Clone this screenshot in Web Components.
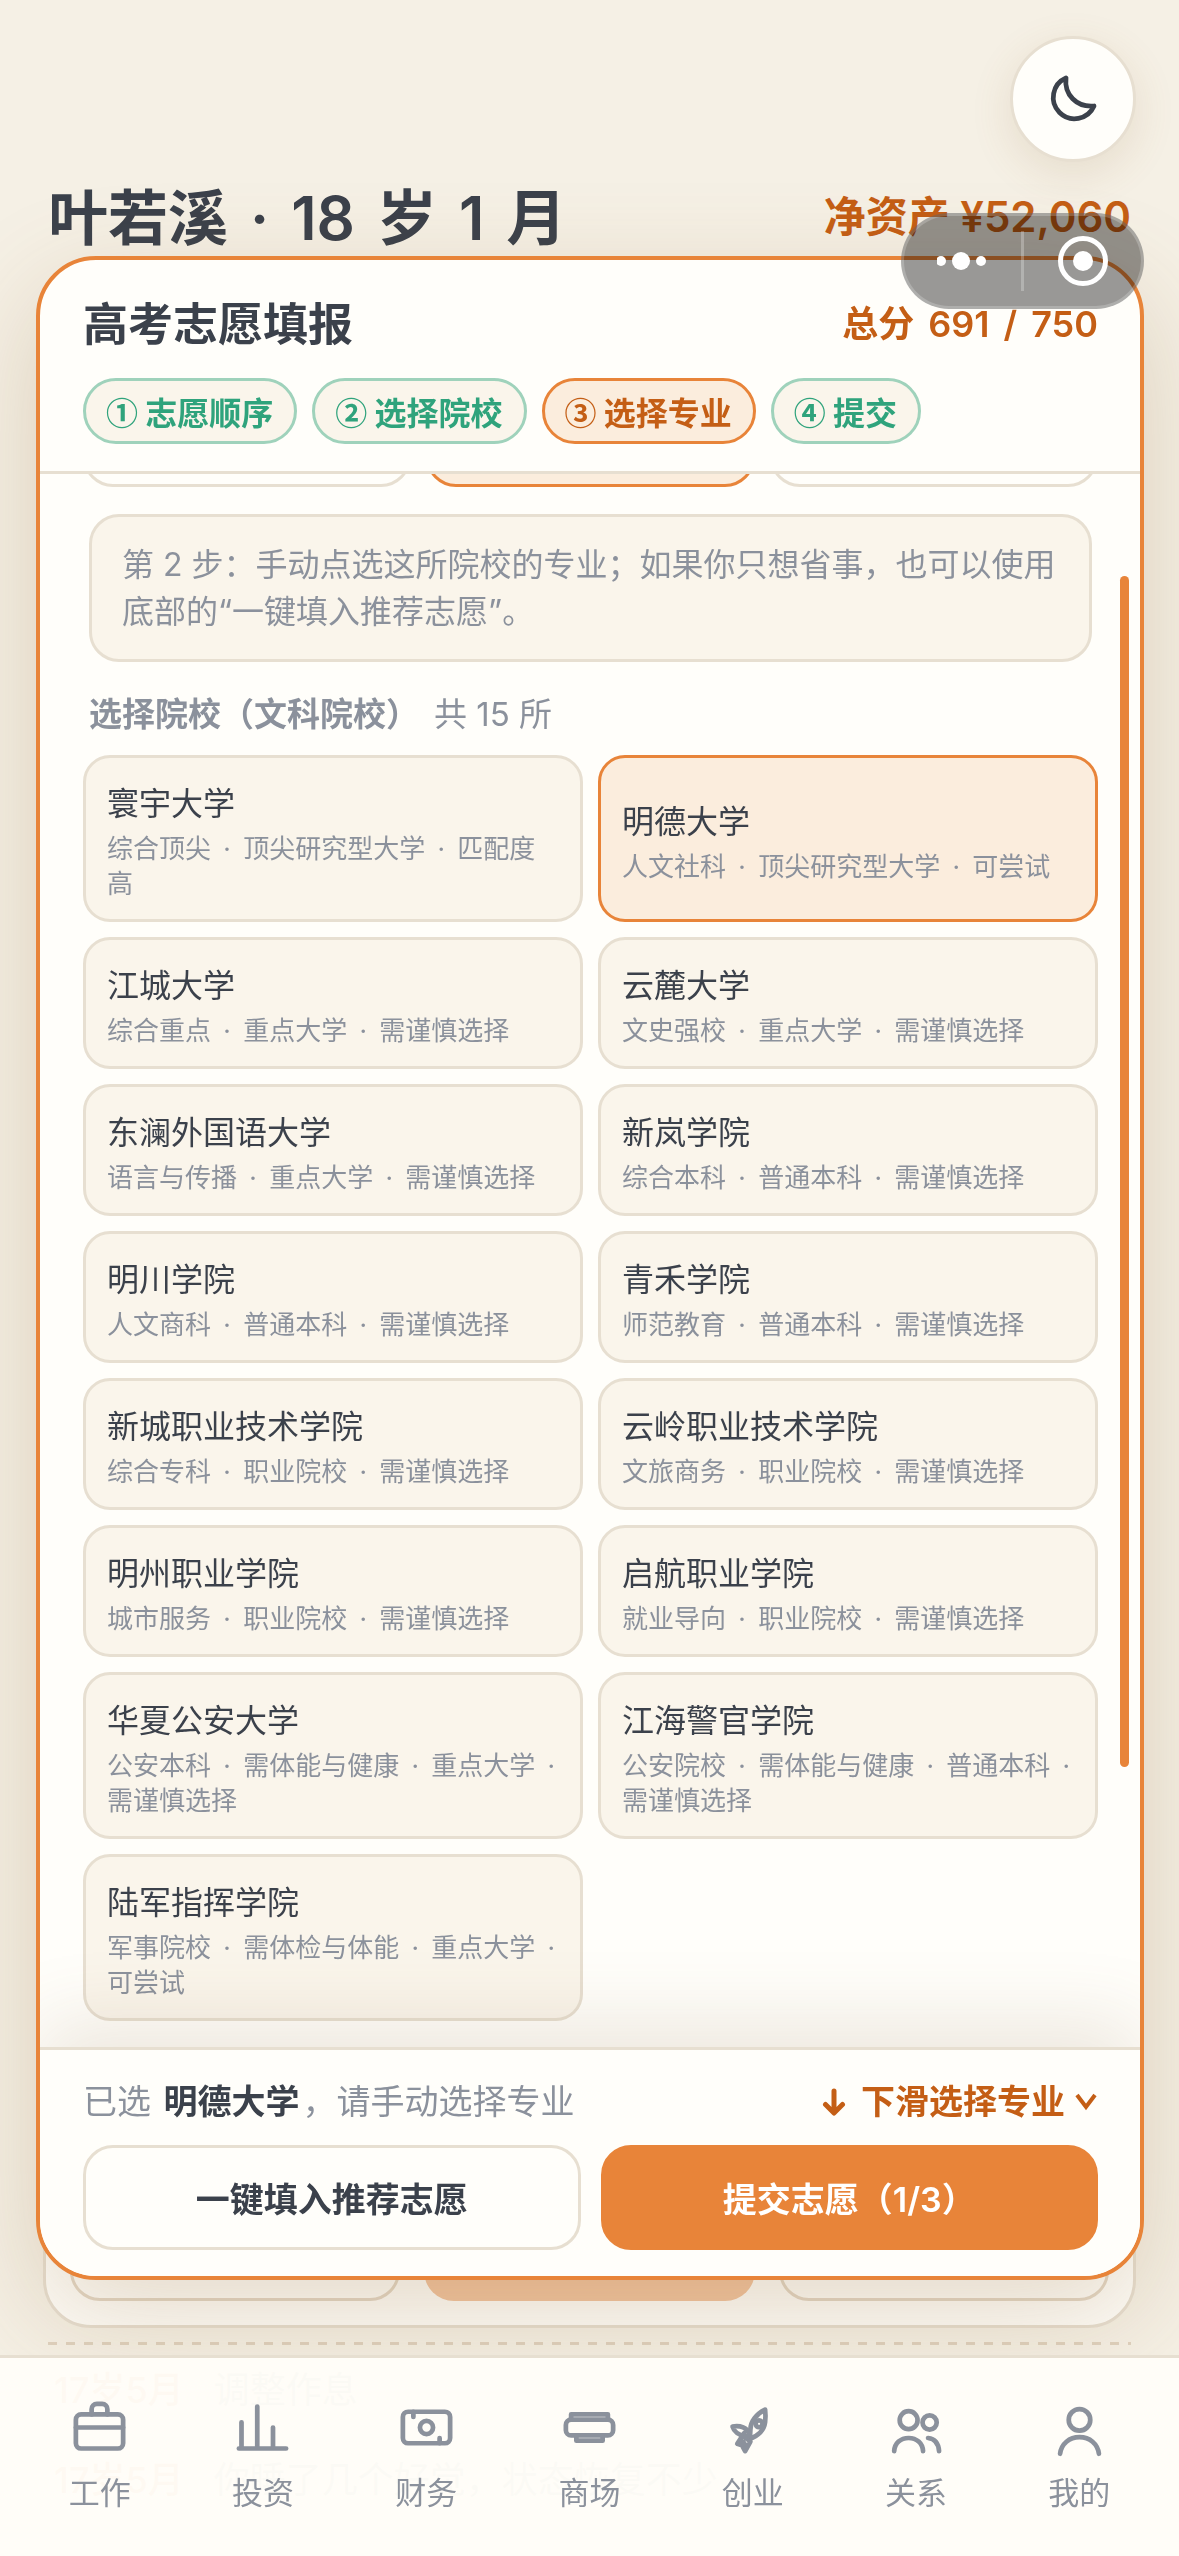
<!DOCTYPE html>
<html lang="zh-CN">
<head>
<meta charset="utf-8">
<meta name="viewport" content="width=device-width, initial-scale=1">
<title>高考志愿填报</title>
<style>
    :root {
        --ink: #3b414b;
        --muted: #8b919c;
        --accent: #e88439;
        --accent-deep: #c45e15;
        --accent-soft: #fbeddd;
        --green: #2fa37c;
        --green-line: #9fd2bb;
        --surface: #fffefa;
        --cream: #faf5eb;
        --line: #e7dfd1;
        --page: #f5f0e5;
    }

    body {
        margin: 0;
        height: 100vh;
        overflow: hidden;
        background: var(--page);
        color: var(--ink);
        font-family: Inter, "Noto Sans CJK SC", sans-serif;
        font-size: 32px;
    }
</style>
</head>
<body>
<game-page>
    <theme-toggle slot="toggle"></theme-toggle>
    <status-header slot="status" name="叶若溪 · 18 岁 1 月" assets="净资产 ¥52,060"></status-header>
    <event-card slot="event"></event-card>
    <log-line slot="log" when="17岁5月">调整作息</log-line>
    <log-line slot="log" when="17岁5月">你睡了几个好觉，状态恢复不少</log-line>
</game-page>
<app-tabbar></app-tabbar>
<volunteer-dialog></volunteer-dialog>
<mini-capsule></mini-capsule>

<script>
// one span per word, so that the row's gap sets the space between them
const words = text => text.split(" ").map(word => `<span>${word}</span>`).join(" ");

class GamePage extends HTMLElement {

    constructor() {
        super();
        this.shadowDOM = this.attachShadow({mode: "open"});
        this.shadowDOM.innerHTML = `
            <style>
                :host {
                    display: flex;
                    flex-direction: column;
                    box-sizing: border-box;
                    height: 100vh;
                    padding: 36px 43px 0;
                }

                .top {
                    display: flex;
                    justify-content: flex-end;
                }

                .event {
                    flex: 1;
                    display: flex;
                    margin-top: 12px;
                }

                .log {
                    height: 214px;
                    margin: 14px 5px 0;
                    overflow: hidden;
                }

                .dash {
                    height: 3px;
                    background: repeating-linear-gradient(90deg, #dfd2bf 0 9px, transparent 9px 18px);
                }
            </style>

            <div class="top"><slot name="toggle"></slot></div>
            <slot name="status"></slot>
            <div class="event"><slot name="event"></slot></div>
            <div class="log">
                <div class="dash"></div>
                <slot name="log"></slot>
            </div>`;
    }
}

class ThemeToggle extends HTMLElement {

    constructor() {
        super();
        this.shadowDOM = this.attachShadow({mode: "open"});
        this.shadowDOM.innerHTML = `
            <style>
                :host {
                    display: block;
                }

                button {
                    display: grid;
                    place-items: center;
                    box-sizing: border-box;
                    width: 126px;
                    height: 126px;
                    padding: 0;
                    border: 3px solid var(--line);
                    border-radius: 50%;
                    background: var(--surface);
                    color: var(--ink);
                    box-shadow: 0 12px 42px rgba(150, 105, 60, 0.14);
                }

                svg {
                    width: 60px;
                    height: 60px;
                }
            </style>

            <button type="button" aria-label="切换深色模式">
                <svg viewBox="0 0 24 24" fill="none" stroke="currentColor" stroke-width="1.9" stroke-linejoin="round" stroke-linecap="round">
                    <path d="M20.400 14.800A8.500 8.500 0 1 1 9.200 3.600c-.8 6.600 4.200 11.800 11.200 11.200z"/>
                </svg>
            </button>`;
    }
}

class StatusHeader extends HTMLElement {

    connectedCallback() {
        this.shadowDOM = this.attachShadow({mode: "open"});
        this.shadowDOM.innerHTML = `
            <style>
                :host {
                    display: flex;
                    justify-content: space-between;
                    align-items: flex-start;
                    height: 86px;
                    margin: 14px 5px 0;
                }

                h1 {
                    display: flex;
                    gap: 22px;
                    margin: 0;
                    font-size: 60px;
                    font-weight: 600;
                    line-height: 84px;
                }

                .assets {
                    color: var(--accent-deep);
                    font-size: 42px;
                    font-weight: 600;
                    line-height: 82px;
                }
            </style>

            <h1>${words(this.getAttribute("name"))}</h1>
            <div class="assets">${this.getAttribute("assets")}</div>`;
    }
}

class EventCard extends HTMLElement {

    constructor() {
        super();
        this.shadowDOM = this.attachShadow({mode: "open"});
        this.shadowDOM.innerHTML = `
            <style>
                :host {
                    flex: 1;
                    display: grid;
                    grid-template-columns: repeat(3, 1fr);
                    align-items: end;
                    gap: 24px;
                    padding: 24px;
                    border: 3px solid var(--line);
                    border-radius: 48px;
                    background: #fffefa;
                }

                div {
                    box-sizing: border-box;
                    height: 104px;
                    border: 3px solid #e4d9c8;
                    border-radius: 30px;
                }

                .main {
                    border: 0;
                    background: #f3c6a2;
                }
            </style>

            <div></div>
            <div class="main"></div>
            <div></div>`;
    }
}

class LogLine extends HTMLElement {

    constructor() {
        super();
        this.shadowDOM = this.attachShadow({mode: "open"});
        this.shadowDOM.innerHTML = `
            <style>
                :host {
                    display: flex;
                    gap: 30px;
                    padding-left: 6px;
                    color: #6c727c;
                    font-size: 36px;
                    line-height: 90px;
                }

                time {
                    color: var(--accent-deep);
                    font-weight: 500;
                }
            </style>

            <time>${this.getAttribute("when")}</time>
            <span><slot></slot></span>`;
    }
}

class StepPill extends HTMLElement {

    constructor() {
        super();
        this.shadowDOM = this.attachShadow({mode: "open"});
        this.shadowDOM.innerHTML = `
            <style>
                :host {
                    display: block;
                    box-sizing: border-box;
                    padding: 0 21px 0 20px;
                    border: 3px solid var(--green-line);
                    border-radius: 33px;
                    background: var(--cream);
                    color: var(--green);
                    font-family: "Noto Sans CJK SC", sans-serif;
                    font-weight: 600;
                    line-height: 60px;
                    white-space: nowrap;
                }

                :host([active]) {
                    border-color: var(--accent);
                    background: var(--accent-soft);
                    color: var(--accent-deep);
                }
            </style>

            <slot></slot>`;
    }
}

class SchoolCard extends HTMLElement {

    set school(school) {
        this._school = school;
        this.render();
    }

    render() {
        if (!this.shadowDOM) {
            this.shadowDOM = this.attachShadow({mode: "open"});
        }
        this.shadowDOM.innerHTML = `
            <style>
                :host {
                    display: flex;
                }

                button {
                    flex: 1;
                    display: flex;
                    flex-direction: column;
                    justify-content: center;
                    box-sizing: border-box;
                    padding: 18px 22px 18px 21px;
                    border: 3px solid var(--line);
                    border-radius: 27px;
                    background: var(--cream);
                    color: var(--ink);
                    font: inherit;
                    text-align: left;
                }

                button[aria-pressed="true"] {
                    border-color: var(--accent);
                    background: var(--accent-soft);
                }

                .name {
                    font-size: 32px;
                    line-height: 55px;
                }

                .tags {
                    color: var(--muted);
                    font-size: 26px;
                    line-height: 35px;
                }

                .tag:not(:last-child) {
                    margin-right: 5px;
                }

                .dot {
                    margin-right: 5px;
                }

                .dot.last {
                    margin-right: 0;
                }
            </style>

            <button type="button" aria-pressed="${Boolean(this._school.selected)}">
                <span class="name">${this._school.name}</span>
                <span class="tags">${this.renderTags()}</span>
            </button>`;
    }

    renderTags() {
        return this._school.tags.map((tag, i) => {
            const dot = i === 0 ? "" : `<span class="dot${i === 3 ? " last" : ""}">·</span> `;
            return `${dot}<span class="tag">${tag}</span>`;
        }).join(" ");
    }
}

const schools = [
    {name: "寰宇大学", tags: ["综合顶尖", "顶尖研究型大学", "匹配度高"]},
    {name: "明德大学", tags: ["人文社科", "顶尖研究型大学", "可尝试"], selected: true},
    {name: "江城大学", tags: ["综合重点", "重点大学", "需谨慎选择"]},
    {name: "云麓大学", tags: ["文史强校", "重点大学", "需谨慎选择"]},
    {name: "东澜外国语大学", tags: ["语言与传播", "重点大学", "需谨慎选择"]},
    {name: "新岚学院", tags: ["综合本科", "普通本科", "需谨慎选择"]},
    {name: "明川学院", tags: ["人文商科", "普通本科", "需谨慎选择"]},
    {name: "青禾学院", tags: ["师范教育", "普通本科", "需谨慎选择"]},
    {name: "新城职业技术学院", tags: ["综合专科", "职业院校", "需谨慎选择"]},
    {name: "云岭职业技术学院", tags: ["文旅商务", "职业院校", "需谨慎选择"]},
    {name: "明州职业学院", tags: ["城市服务", "职业院校", "需谨慎选择"]},
    {name: "启航职业学院", tags: ["就业导向", "职业院校", "需谨慎选择"]},
    {name: "华夏公安大学", tags: ["公安本科", "需体能与健康", "重点大学", "需谨慎选择"]},
    {name: "江海警官学院", tags: ["公安院校", "需体能与健康", "普通本科", "需谨慎选择"]},
    {name: "陆军指挥学院", tags: ["军事院校", "需体检与体能", "重点大学", "可尝试"]}
];

class VolunteerDialog extends HTMLElement {

    constructor() {
        super();
        this.shadowDOM = this.attachShadow({mode: "open"});
        this.shadowDOM.innerHTML = `
            <style>
                :host {
                    position: fixed;
                    inset: 256px 35px 276px 36px;
                    display: flex;
                    flex-direction: column;
                    border: 4px solid var(--accent);
                    border-radius: 60px;
                    background: var(--surface);
                    box-shadow: 0 36px 108px rgba(140, 95, 45, 0.23);
                    overflow: hidden;
                }

                header {
                    padding: 27px 42px 27px 43px;
                    border-bottom: 3px solid var(--line);
                }

                .title {
                    display: flex;
                    justify-content: space-between;
                    align-items: center;
                    height: 68px;
                    margin-bottom: 23px;
                }

                h2 {
                    margin: 0;
                    font-size: 45px;
                    font-weight: 700;
                }

                .score {
                    display: flex;
                    align-items: baseline;
                    gap: 14px;
                    color: var(--accent-deep);
                    font-size: 36px;
                    font-weight: 600;
                }

                .steps {
                    display: flex;
                    gap: 15px;
                }

                .body {
                    position: relative;
                    flex: 1;
                    display: flex;
                    flex-direction: column;
                    justify-content: flex-end;
                    min-height: 0;
                    padding: 0 42px 26px 43px;
                    overflow: hidden;
                }

                .orders {
                    display: grid;
                    grid-template-columns: repeat(3, 1fr);
                    gap: 15px;
                }

                .orders div {
                    box-sizing: border-box;
                    height: 126px;
                    border: 3px solid var(--line);
                    border-radius: 30px;
                }

                .orders .on {
                    border-color: var(--accent);
                    background: var(--accent-soft);
                }

                .hint {
                    margin: 27px 6px 0;
                    padding: 24px 25px 24px 30px;
                    border: 3px solid var(--line);
                    border-radius: 30px;
                    background: var(--cream);
                    color: var(--muted);
                    line-height: 47px;
                }

                h3 {
                    margin: 27px 6px 0;
                    color: var(--muted);
                    font-size: 33px;
                    font-weight: 600;
                    line-height: 50px;
                }

                h3 small {
                    margin-left: 15px;
                    font-size: 33px;
                    font-weight: 400;
                }

                .grid {
                    display: grid;
                    grid-template-columns: repeat(2, 1fr);
                    gap: 15px;
                    margin-top: 16px;
                }

                .thumb {
                    position: absolute;
                    top: 6.5%;
                    right: 11px;
                    width: 9px;
                    height: 75.7%;
                    border-radius: 5px;
                    background: var(--accent);
                }

                footer {
                    position: relative;
                    padding: 26px 42px 26px 43px;
                    border-top: 3px solid var(--line);
                    background: var(--surface);
                    box-shadow: 0 -24px 72px rgba(130, 95, 55, 0.14);
                }

                .summary {
                    display: flex;
                    justify-content: space-between;
                    margin-bottom: 17px;
                    color: var(--muted);
                    font-size: 34px;
                    line-height: 52px;
                }

                .summary b {
                    margin: 0 3px;
                    color: var(--ink);
                    font-weight: 700;
                }

                .summary a {
                    display: flex;
                    align-items: center;
                    gap: 9px;
                    color: var(--accent-deep);
                    font-weight: 600;
                    text-decoration: none;
                }

                .arrow {
                    width: 24px;
                    height: 30px;
                    margin-right: 6px;
                }

                .chevron {
                    width: 24px;
                    height: 20px;
                }

                .actions {
                    display: grid;
                    grid-template-columns: repeat(2, 1fr);
                    gap: 20px;
                }

                .actions button {
                    height: 105px;
                    padding: 0;
                    border: 3px solid var(--line);
                    border-radius: 30px;
                    background: var(--surface);
                    color: var(--ink);
                    font: inherit;
                    font-size: 34px;
                    font-weight: 700;
                }

                .actions .primary {
                    border-color: var(--accent);
                    background: var(--accent);
                    color: #fff;
                    font-weight: 600;
                }
            </style>

            <header>
                <div class="title">
                    <h2>高考志愿填报</h2>
                    <div class="score">${words("总分 691 / 750")}</div>
                </div>
                <div class="steps">
                    <step-pill>① 志愿顺序</step-pill>
                    <step-pill>② 选择院校</step-pill>
                    <step-pill active>③ 选择专业</step-pill>
                    <step-pill>④ 提交</step-pill>
                </div>
            </header>
            <div class="body">
                <div class="orders"><div></div><div class="on"></div><div></div></div>
                <div class="hint">第 2 步：手动点选这所院校的专业；如果你只想省事，也可以使用底部的“一键填入推荐志愿”。</div>
                <h3>选择院校（文科院校）<small>共 15 所</small></h3>
                <div class="grid"></div>
                <div class="thumb"></div>
            </div>
            <footer>
                <div class="summary">
                    <span>已选 <b>明德大学</b>，请手动选择专业</span>
                    <a href="#majors">
                        <svg class="arrow" viewBox="0 0 24 30" fill="none" stroke="currentColor" stroke-width="5" stroke-linecap="round" stroke-linejoin="round"><path d="M12 4v21M3.500 17.500 12 26l8.500-8.500"/></svg>
                        下滑选择专业
                        <svg class="chevron" viewBox="0 0 24 20" fill="none" stroke="currentColor" stroke-width="4"><path d="M3 3l9 12 9-12"/></svg>
                    </a>
                </div>
                <div class="actions">
                    <button type="button">一键填入推荐志愿</button>
                    <button type="button" class="primary">提交志愿（1/3）</button>
                </div>
            </footer>`;
        this.renderSchools();
    }

    renderSchools() {
        const grid = this.shadowDOM.querySelector(".grid");
        schools.forEach(school => {
            const card = document.createElement("school-card");
            card.school = school;
            grid.appendChild(card);
        });
    }
}

const icons = {
    work: `<rect x="3" y="7" width="18" height="13" rx="2"/><path d="M9 7V5a2 2 0 0 1 2-2h2a2 2 0 0 1 2 2v2M3 12h18"/>`,
    invest: `<path d="M3 20h18M4 20V10M10 20V4M16 20v-8"/>`,
    finance: `<rect x="3" y="6" width="18" height="12" rx="2"/><circle cx="12" cy="12" r="2.500"/><path d="M7 6v2M17 16v2"/>`,
    mall: `<rect x="3" y="9" width="18" height="6" rx="2"/><path d="M5 9V7h14v2M7 15v2h10v-2"/>`,
    startup: `<path d="M16.800 5.200c-3.300 1.600-5.600 4.600-5.600 7.600 0 1.400-.2 2.600-.4 3.600 3.300-1.200 5.600-3.400 6-6.400.2-1.600.2-3.200 0-4.800z"/>
        <circle cx="14.500" cy="10.600" r="1.300"/>
        <path d="M10.800 14.200c-.8-2-3.400-3.200-6.400-2.600 .6 2 2.400 3.400 4.600 3.600M8.800 14.200l-2.600 4 1.800.6 1.200 2.200 2-3.600-2.400-2 1.600-.2M8.400 17.400l1.200 1.800"/>`,
    relation: `<circle cx="9" cy="9.200" r="3.400"/><circle cx="17" cy="10.100" r="2.700"/><path d="M3.500 21c.2-3 2.400-5 5.500-5s5.300 2 5.500 5M16.400 16c2.600.3 4 2.200 4.200 5"/>`,
    mine: `<circle cx="12" cy="9.100" r="4.100"/><path d="M4.600 22c.5-3.800 3.500-6.300 7.400-6.300s6.900 2.500 7.400 6.300"/>`
};

class TabItem extends HTMLElement {

    connectedCallback() {
        this.shadowDOM = this.attachShadow({mode: "open"});
        this.shadowDOM.innerHTML = `
            <style>
                :host {
                    flex: 1;
                    display: block;
                }

                a {
                    display: flex;
                    flex-direction: column;
                    align-items: center;
                    gap: 9px;
                    color: var(--muted);
                    font-size: 31px;
                    line-height: 50px;
                    text-decoration: none;
                }

                svg {
                    width: 63px;
                    height: 63px;
                }
            </style>

            <a href="#${this.getAttribute("icon")}">
                <svg viewBox="0 0 24 24" fill="none" stroke="currentColor" stroke-width="1.800" stroke-linecap="round" stroke-linejoin="round">${icons[this.getAttribute("icon")]}</svg>
                <span><slot></slot></span>
            </a>`;
    }
}

class AppTabbar extends HTMLElement {

    constructor() {
        super();
        this.shadowDOM = this.attachShadow({mode: "open"});
        this.shadowDOM.innerHTML = `
            <style>
                :host {
                    position: fixed;
                    inset: auto 0 0;
                    z-index: 1;
                    display: block;
                    border-top: 3px solid var(--line);
                    background: rgba(255, 253, 248, 0.975);
                }

                nav {
                    display: flex;
                    padding: 38px 18px;
                }
            </style>

            <nav>
                <tab-item icon="work">工作</tab-item>
                <tab-item icon="invest">投资</tab-item>
                <tab-item icon="finance">财务</tab-item>
                <tab-item icon="mall">商场</tab-item>
                <tab-item icon="startup">创业</tab-item>
                <tab-item icon="relation">关系</tab-item>
                <tab-item icon="mine">我的</tab-item>
            </nav>`;
    }
}

class MiniCapsule extends HTMLElement {

    constructor() {
        super();
        this.shadowDOM = this.attachShadow({mode: "open"});
        this.shadowDOM.innerHTML = `
            <style>
                :host {
                    position: fixed;
                    top: 213px;
                    right: 35px;
                    z-index: 2;
                    display: flex;
                    align-items: center;
                    box-sizing: border-box;
                    width: 243px;
                    height: 96px;
                    border: 3px solid rgba(255, 255, 255, 0.2);
                    border-radius: 48px;
                    background: rgba(0, 0, 0, 0.4);
                }

                button {
                    flex: 1;
                    display: grid;
                    place-items: center;
                    padding: 0;
                    border: 0;
                    background: none;
                }

                i {
                    width: 3px;
                    height: 60px;
                    background: rgba(255, 255, 255, 0.25);
                }
            </style>

            <button type="button" aria-label="更多">
                <svg width="52" height="20" viewBox="0 0 52 20" fill="#fff"><circle cx="4" cy="10" r="5"/><circle cx="24" cy="10" r="9"/><circle cx="44" cy="10" r="5"/></svg>
            </button>
            <i></i>
            <button type="button" aria-label="关闭">
                <svg width="52" height="52" viewBox="0 0 52 52" fill="none" stroke="#fff" stroke-width="5"><circle cx="26" cy="26" r="22.500"/><circle cx="26" cy="26" r="10" fill="#fff" stroke="none"/></svg>
            </button>`;
    }
}

customElements.define("step-pill", StepPill);
customElements.define("school-card", SchoolCard);
customElements.define("tab-item", TabItem);
customElements.define("theme-toggle", ThemeToggle);
customElements.define("status-header", StatusHeader);
customElements.define("event-card", EventCard);
customElements.define("log-line", LogLine);
customElements.define("game-page", GamePage);
customElements.define("volunteer-dialog", VolunteerDialog);
customElements.define("app-tabbar", AppTabbar);
customElements.define("mini-capsule", MiniCapsule);
</script>
</body>
</html>
